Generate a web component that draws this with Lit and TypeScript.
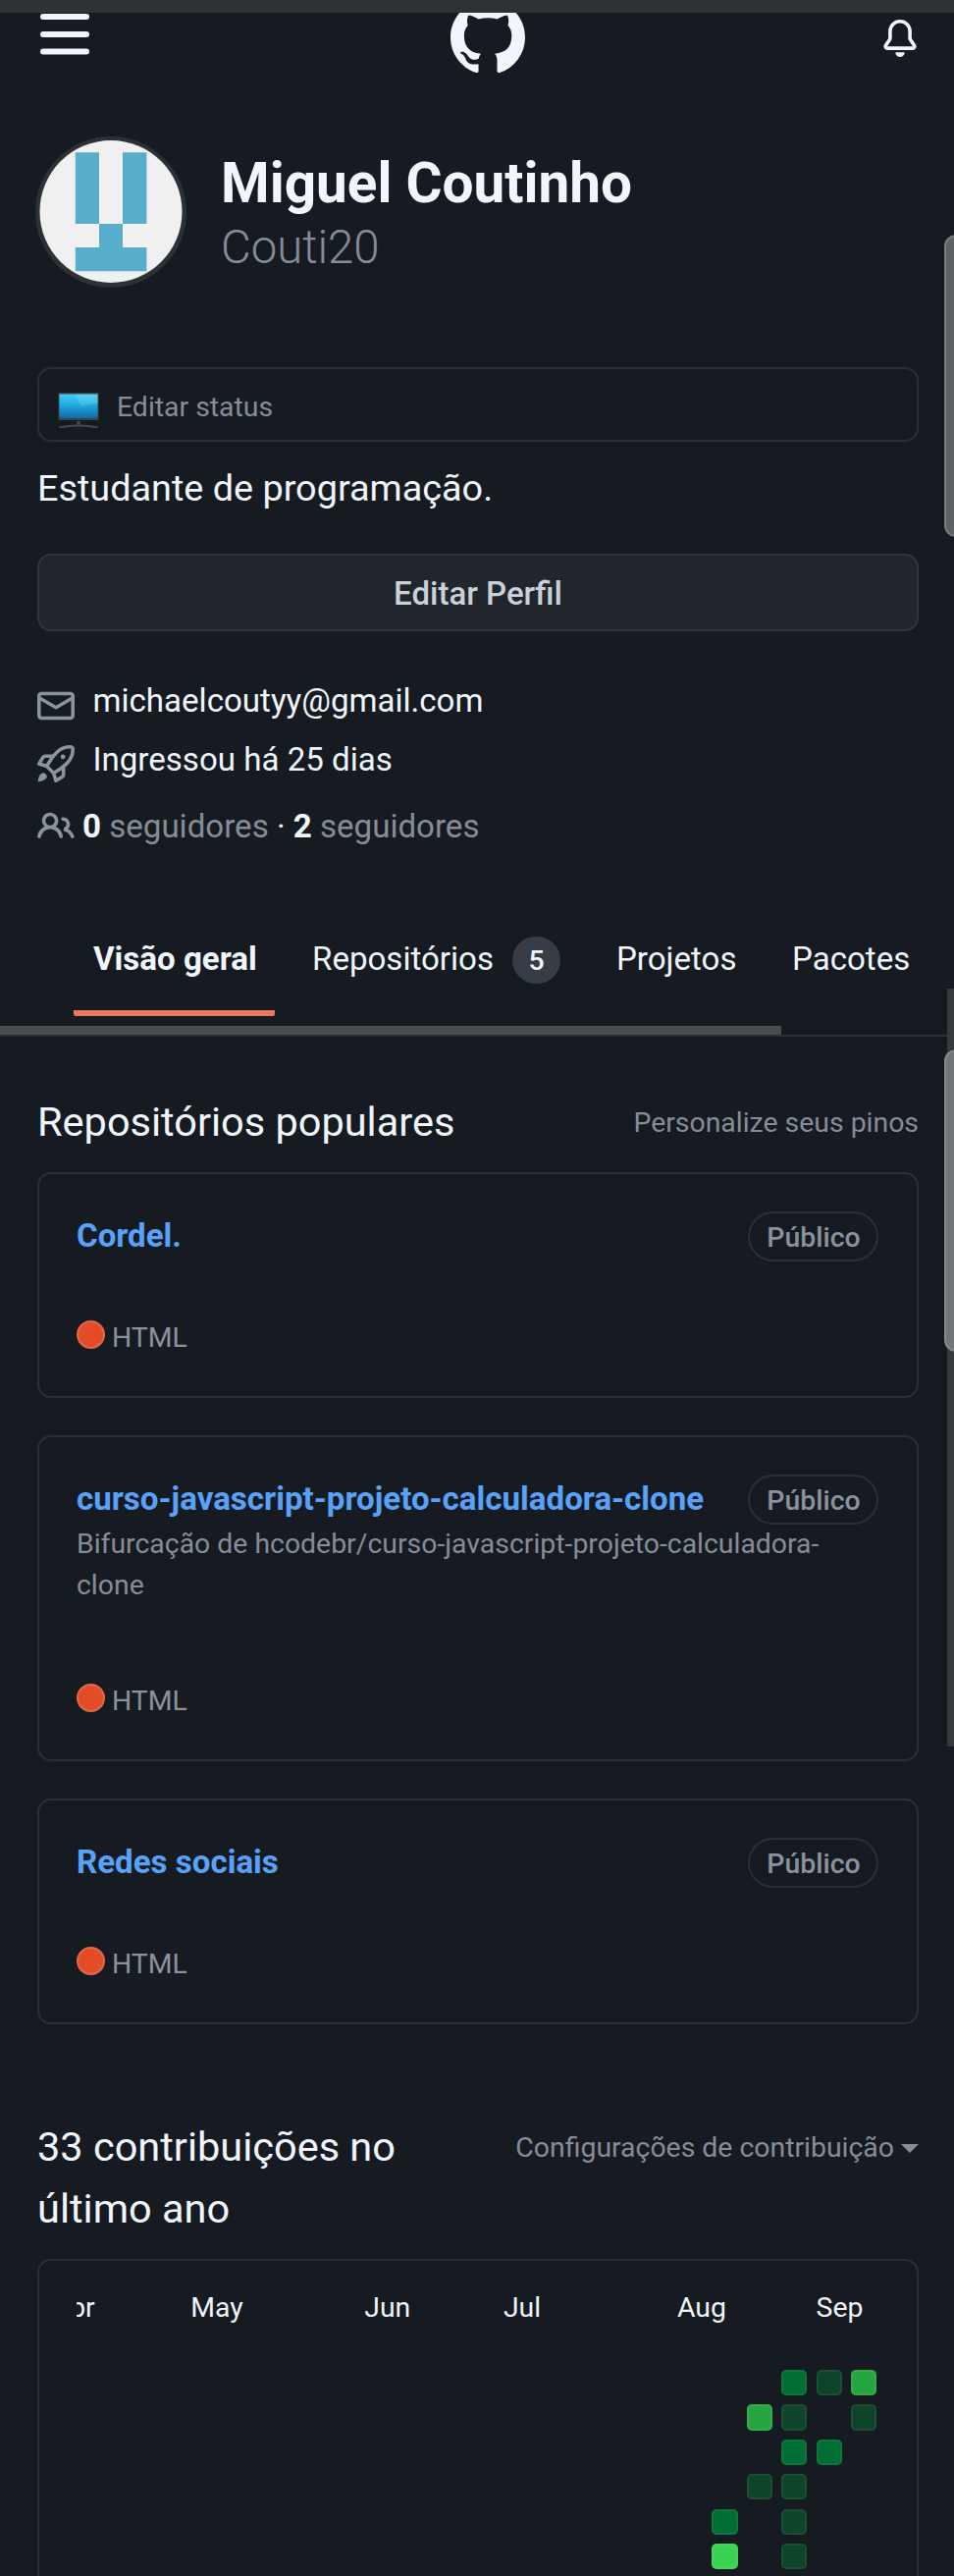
import { LitElement, html, css, svg, nothing } from "lit";
import { customElement, property } from "lit/decorators.js";

const ICONS: Record<string, string> = {
  github:
    "M8 0C3.58 0 0 3.58 0 8c0 3.54 2.29 6.53 5.47 7.59.4.07.55-.17.55-.38 0-.19-.01-.82-.01-1.49-2.01.37-2.53-.49-2.69-.94-.09-.23-.48-.94-.82-1.13-.28-.15-.68-.52-.01-.53.63-.01 1.08.58 1.23.82.72 1.21 1.87.87 2.33.66.07-.52.28-.87.51-1.07-1.78-.2-3.64-.89-3.64-3.95 0-.87.31-1.59.82-2.15-.08-.2-.36-1.02.08-2.12 0 0 .67-.21 2.2.82.64-.18 1.32-.27 2-.27.68 0 1.36.09 2 .27 1.53-1.04 2.2-.82 2.2-.82.44 1.1.16 1.92.08 2.12.51.56.82 1.27.82 2.15 0 3.07-1.87 3.75-3.65 3.95.29.25.54.73.54 1.48 0 1.07-.01 1.93-.01 2.2 0 .21.15.46.55.38A8.013 8.013 0 0016 8c0-4.42-3.58-8-8-8z",
  bell: "M8 16a2 2 0 001.985-1.75c.017-.137-.097-.25-.235-.25h-3.5c-.138 0-.252.113-.235.25A2 2 0 008 16zM3 5a5 5 0 0110 0v2.947c0 .05.015.098.042.139l1.703 2.555A1.518 1.518 0 0113.482 13H2.518a1.518 1.518 0 01-1.263-2.36l1.703-2.554A.25.25 0 003 7.947V5zm5-3.5A3.5 3.5 0 004.5 5v2.947c0 .346-.102.683-.294.97l-1.703 2.556a.018.018 0 00-.003.01l.001.006c0 .002.002.004.004.006a.017.017 0 00.006.004l.007.001h10.964l.007-.001a.016.016 0 00.006-.004.016.016 0 00.004-.006l.001-.007a.017.017 0 00-.003-.01l-1.703-2.554a1.75 1.75 0 01-.294-.97V5A3.5 3.5 0 008 1.5z",
  mail: "M1.75 2A1.75 1.75 0 000 3.75v8.5C0 13.216.784 14 1.75 14h12.5A1.75 1.75 0 0016 12.25v-8.5A1.75 1.75 0 0014.25 2H1.75zM14.5 4.07v-.32a.25.25 0 00-.25-.25H1.75a.25.25 0 00-.25.25v.32L8 7.88l6.5-3.81zm-13 1.74v6.441c0 .138.112.25.25.25h12.5a.25.25 0 00.25-.25V5.809L8.38 9.397a.75.75 0 01-.76 0L1.5 5.809z",
  rocket:
    "M14.064 0a8.75 8.75 0 00-6.187 2.563l-.459.458c-.314.314-.616.641-.904.979H3.31a1.75 1.75 0 00-1.49.833L.11 7.607a.75.75 0 00.418 1.11l3.102.954c.037.051.079.1.124.145l2.429 2.428c.046.046.094.088.145.125l.954 3.102a.75.75 0 001.11.418l2.774-1.707a1.75 1.75 0 00.833-1.49V9.485c.338-.288.665-.59.979-.904l.458-.459A8.75 8.75 0 0016 1.936V1.75A1.75 1.75 0 0014.25 0h-.186zM10.5 10.625c-.088.06-.177.118-.266.175l-2.35 1.521.548 1.783 1.949-1.2a.25.25 0 00.119-.213v-2.066zM3.678 8.116L5.2 5.766c.058-.09.117-.178.176-.266H3.309a.25.25 0 00-.213.119l-1.2 1.95 1.782.547zm5.26-4.493A7.25 7.25 0 0114.063 1.5h.186a.25.25 0 01.25.25v.186a7.25 7.25 0 01-2.123 5.127l-.459.458a15.21 15.21 0 01-2.499 2.02l-2.317 1.5-2.143-2.143 1.5-2.317a15.25 15.25 0 012.02-2.5l.458-.458h.002zM12 5a1 1 0 11-2 0 1 1 0 012 0zm-8.44 9.56a1.5 1.5 0 10-2.12-2.12c-.734.73-1.047 2.332-1.15 3.003a.23.23 0 00.265.265c.671-.103 2.273-.416 3.005-1.148z",
  people:
    "M5.5 3.5a2 2 0 100 4 2 2 0 000-4zM2 5.5a3.5 3.5 0 115.898 2.549 5.507 5.507 0 013.034 4.084.75.75 0 11-1.482.235 4.001 4.001 0 00-7.9 0 .75.75 0 01-1.482-.236A5.507 5.507 0 013.102 8.05 3.49 3.49 0 012 5.5zM11 4a.75.75 0 100 1.5 1.5 1.5 0 01.666 2.844.75.75 0 00-.416.672v.352a.75.75 0 00.574.73c1.2.289 2.162 1.2 2.522 2.372a.75.75 0 101.434-.44 5.01 5.01 0 00-2.56-3.012A3 3 0 0011 4z",
};

const icon = (name: string, cls: string) =>
  html`<svg class=${cls} viewBox="0 0 16 16" fill="currentColor" fill-rule="evenodd">${svg`<path d=${ICONS[name]}></path>`}</svg>`;

@customElement("repo-card")
class RepoCard extends LitElement {
  @property() name = "";
  @property() note = "";

  static styles = css`
    :host { display: block; }
    .card {
      box-sizing: border-box;
      display: flex;
      flex-direction: column;
      justify-content: space-between;
      min-height: 230px;
      padding: 38px 39px 38px 38px;
      border: 2px solid #2b2f36;
      border-radius: 14px;
    }
    .tall { min-height: 332px; }
    .head { display: flex; justify-content: space-between; height: 50px; }
    .name { font-size: 33.08px; line-height: 50px; font-weight: 700; color: #58a2f8; white-space: nowrap; }
    .pill {
      box-sizing: border-box;
      width: 133px;
      height: 51px;
      padding-left: 1px;
      border: 2px solid #2b2f36;
      border-radius: 26px;
      text-align: center;
      font-size: 28.4px;
      line-height: 50px;
      font-weight: 500;
      color: #8b929c;
    }
    .note { font-size: 28.4px; line-height: 42px; color: #868d97; }
    .lang { display: flex; align-items: center; gap: 7px; height: 43px; font-size: 28.4px; line-height: 43px; color: #8b929c; }
    .dot { box-sizing: border-box; width: 29px; height: 29px; margin-bottom: 6px; border-radius: 50%; background: #e34c26; border: 2px solid #e2694b; }
  `;

  render() {
    return html`<div class="card ${this.note ? "tall" : ""}">
      <div>
        <div class="head"><span class="name">${this.name}</span><span class="pill">Público</span></div>
        ${this.note ? html`<div class="note">${this.note}</div>` : nothing}
      </div>
      <div class="lang"><span class="dot"></span><span>HTML</span></div>
    </div>`;
  }
}

// Week column (1-based), weekday row and intensity level of each active day.
const DAYS: [number, number, number][] = [
  [22, 1, 2], [23, 1, 1], [24, 1, 3],
  [21, 2, 3], [22, 2, 1], [24, 2, 1],
  [22, 3, 2], [23, 3, 2],
  [21, 4, 1], [22, 4, 1],
  [20, 5, 2], [22, 5, 1],
  [20, 6, 4], [22, 6, 1],
];
const MONTHS: [string, number][] = [["Apr", 1], ["May", 5], ["Jun", 10], ["Jul", 14], ["Aug", 19], ["Sep", 23]];

@customElement("contribution-graph")
class ContributionGraph extends LitElement {
  static styles = css`
    :host { display: block; }
    .card { box-sizing: border-box; height: 380px; padding: 31px 39px 0 38px; border: 2px solid #2b2f36; border-radius: 14px; }
    .clip { overflow: hidden; }
    .months, .days { display: grid; grid-template-columns: repeat(24, 35.42px); margin-left: -25.4px; }
    .months { height: 44.5px; font-size: 28.4px; line-height: 34px; color: #f0f6fc; }
    .days { grid-template-rows: repeat(7, 35.42px); }
    .day { box-sizing: border-box; width: 26.3px; height: 26.3px; border-radius: 5px; border: 2px solid rgba(255, 255, 255, 0.06); }
    .l1 { background: #0e4429; }
    .l2 { background: #006d32; }
    .l3 { background: #26a641; }
    .l4 { background: #39d353; }
  `;

  render() {
    return html`<div class="card"><div class="clip">
      <div class="months">${MONTHS.map(([m, c]) => html`<span style="grid-column:${c};grid-row:1">${m}</span>`)}</div>
      <div class="days">${DAYS.map(([c, r, l]) => html`<span class="day l${l}" style="grid-column:${c};grid-row:${r + 1}"></span>`)}</div>
    </div></div>`;
  }
}

@customElement("app-root")
class AppRoot extends LitElement {
  static styles = css`
    :host {
      display: block;
      position: relative;
      width: 972px;
      height: 2624px;
      overflow: hidden;
      background: #161b22;
      color: #f0f6fc;
      font-family: Roboto, "Liberation Sans", sans-serif;
    }
    .browser-edge { position: absolute; top: 0; left: 0; width: 100%; height: 13px; background: #303133; }
    .topbar { display: flex; justify-content: space-between; height: 76px; padding: 0 36px 0 41px; }
    .menu { display: block; width: 50px; height: 76px; }
    .mark { width: 76px; height: 76px; margin-left: 5px; }
    .bell { width: 38px; height: 38px; margin-top: 20px; }
    .page { padding: 0 36px 0 38px; }
    .profile { display: flex; align-items: center; gap: 35px; margin: 63px 0 0 -2px; height: 154px; }
    .avatar { width: 154px; height: 154px; }
    .fullname { font-size: 56.7px; line-height: 71px; font-weight: 700; }
    .login { font-size: 47.3px; line-height: 60px; font-weight: 300; color: #868d97; }
    .status {
      box-sizing: border-box;
      display: flex;
      align-items: center;
      gap: 18px;
      height: 76px;
      margin-top: 81px;
      padding: 5px 19px 0;
      border: 2px solid #2b2f36;
      border-radius: 14px;
      font-size: 28.4px;
      color: #868d97;
    }
    .screen { width: 42px; height: 38px; margin-top: 6px; }
    .bio { margin-top: 19px; font-size: 37.8px; line-height: 57px; }
    .edit {
      display: block;
      box-sizing: border-box;
      width: 100%;
      height: 79px;
      margin-top: 38px;
      padding: 2px 0 0;
      border: 2px solid #31363e;
      border-radius: 14px;
      background: #21262d;
      color: #c9d1d9;
      font: 500 33px/50px Roboto, sans-serif;
    }
    .facts { margin-top: 46px; font-size: 33.08px; line-height: 50px; }
    .fact { display: flex; align-items: flex-start; gap: 18.5px; height: 60px; }
    .joined { height: 68px; }
    .follow { gap: 8px; height: 50px; }
    .ic { width: 38px; height: 38px; margin-top: 11px; color: #8b949e; flex: none; }
    .joined .ic { margin-top: 10px; }
    .follow .ic { margin-top: 6px; }
    .muted { color: #868d97; }
    .tabs { display: grid; grid-template-columns: 223px 310px 179px auto; margin-top: 85px; padding-left: 75px; font-size: 33.08px; line-height: 50px; white-space: nowrap; }
    .tab { display: flex; align-items: flex-start; gap: 19px; box-sizing: border-box; height: 83px; padding-left: 20px; }
    .active { width: 205px; border-bottom: 6px solid #ec775c; border-radius: 2px; font-weight: 700; }
    .count { width: 49px; height: 48px; margin-top: 2px; border-radius: 24px; background: #373d47; text-align: center; font-size: 28.4px; line-height: 49px; font-weight: 500; }
    .rail { margin-top: 10px; border-bottom: 2px solid #2b2f36; }
    .rail-thumb { width: 796px; height: 9px; background: #4a4d50; }
    .section-head { display: flex; justify-content: space-between; margin-top: 55px; }
    .contrib-head { margin-top: 93px; }
    .title { width: 400px; font-size: 41.5px; line-height: 63px; white-space: nowrap; }
    .side { display: flex; align-items: center; gap: 7px; height: 43px; margin-top: 11px; font-size: 28.4px; line-height: 43px; color: #868d97; white-space: nowrap; }
    .caret { border: 9px solid transparent; border-top-color: #868d97; border-bottom: 0; margin-top: 2px; }
    .repos { display: flex; flex-direction: column; gap: 38px; margin-top: 20px; }
    .graph { display: block; margin-top: 20px; }
    .track { position: absolute; left: 965px; top: 1007px; width: 7px; height: 772px; background: #38393b; }
    .thumb { position: absolute; box-sizing: border-box; left: 962px; width: 24px; height: 308px; border: 2px solid #7b7d80; border-radius: 12px; background: #5f6164; }
    .upper { top: 239px; }
    .lower { top: 1069px; background: #737577; border-color: #88898b; }
  `;

  render() {
    return html`
      <header class="topbar">
        <svg class="menu" viewBox="0 0 50 76" fill="currentColor">
          <rect x="0" y="14" width="50" height="6" rx="3"></rect>
          <rect x="0" y="32" width="50" height="6" rx="3"></rect>
          <rect x="0" y="49.5" width="50" height="6" rx="3"></rect>
        </svg>
        ${icon("github", "mark")} ${icon("bell", "bell")}
      </header>
      <div class="page">
        <div class="profile">
          <svg class="avatar" viewBox="0 0 154 154">
            <circle cx="77" cy="77" r="77" fill="#2c3037"></circle>
            <circle cx="77" cy="76.5" r="72.5" fill="#f0f0f0"></circle>
            <path fill="#56adcc" d="M40.8 16.3H65V89H40.8zM89 16.3h24.4V89H89zM65 89h24v24h24.4v24.3H40.8V113H65z"></path>
          </svg>
          <div>
            <div class="fullname">Miguel Coutinho</div>
            <div class="login">Couti20</div>
          </div>
        </div>
        <div class="status">
          <svg class="screen" viewBox="0 0 42 38">
            <defs>
              <linearGradient id="glow" x1="0" y1="0" x2="0" y2="1">
                <stop offset="0" stop-color="#45cdf0"></stop>
                <stop offset=".45" stop-color="#20abdf"></stop>
                <stop offset="1" stop-color="#1268a8"></stop>
              </linearGradient>
            </defs>
            <rect x="0.5" y="1" width="41" height="28" fill="#3a4348"></rect>
            <rect x="1.5" y="2.5" width="39" height="24.5" fill="url(#glow)"></rect>
            <path d="M17 2.5h23.5v9L24 14.5z" fill="#8be4fa" opacity=".25"></path>
            <rect x="19.5" y="30" width="3" height="4" fill="#4a4b4c"></rect>
            <path d="M1.5 36.2Q21 33 40.5 36.2" stroke="#47494a" stroke-width="2" fill="none"></path>
          </svg>
          <span>Editar status</span>
        </div>
        <div class="bio">Estudante de programação.</div>
        <button class="edit">Editar Perfil</button>
        <div class="facts">
          <div class="fact">${icon("mail", "ic")}<span>michaelcoutyy@gmail.com</span></div>
          <div class="fact joined">${icon("rocket", "ic")}<span>Ingressou há 25 dias</span></div>
          <div class="fact follow">
            ${icon("people", "ic")}
            <span><b>0</b> <span class="muted">seguidores</span> · <b>2</b> <span class="muted">seguidores</span></span>
          </div>
        </div>
      </div>
      <nav class="tabs">
        <div class="tab active">Visão geral</div>
        <div class="tab">Repositórios<span class="count">5</span></div>
        <div class="tab">Projetos</div>
        <div class="tab">Pacotes</div>
      </nav>
      <div class="rail"><div class="rail-thumb"></div></div>
      <div class="page">
        <div class="section-head">
          <div class="title">Repositórios populares</div>
          <div class="side">Personalize seus pinos</div>
        </div>
        <div class="repos">
          <repo-card name="Cordel."></repo-card>
          <repo-card name="curso-javascript-projeto-calculadora-clone" note="Bifurcação de hcodebr/curso-javascript-projeto-calculadora-clone"></repo-card>
          <repo-card name="Redes sociais"></repo-card>
        </div>
        <div class="section-head contrib-head">
          <div class="title">33 contribuições no<br />último ano</div>
          <div class="side">Configurações de contribuição<span class="caret"></span></div>
        </div>
        <contribution-graph class="graph"></contribution-graph>
      </div>
      <div class="browser-edge"></div>
      <div class="track"></div>
      <div class="thumb upper"></div>
      <div class="thumb lower"></div>
    `;
  }
}
